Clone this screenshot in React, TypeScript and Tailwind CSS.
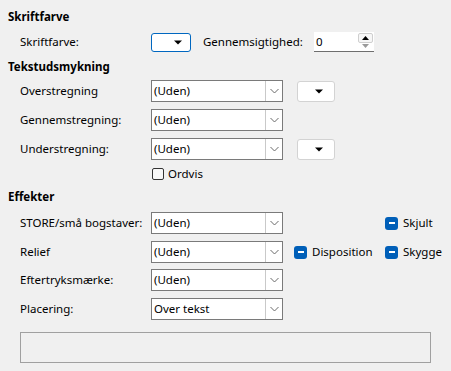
import React from "react";

const Caret = ({ color = "#000" }: { color?: string }) => (
  <svg width="8" height="5" viewBox="0 0 8 5">
    <path d="M0 0.5 H8 L4 4.5 Z" fill={color} />
  </svg>
);

const Chevron = () => (
  <svg width="9" height="6" viewBox="0 0 9 6">
    <path d="M0.5 1 L4.5 5 L8.5 1" fill="none" stroke="#6b6b6b" strokeWidth="1" />
  </svg>
);

function Combo({ value }: { value: string }) {
  return (
    <div className="flex h-[22px] w-[132px] shrink-0 items-stretch border border-[#7a7a7a] bg-white">
      <div className="flex flex-1 items-center pl-[2px] text-black">{value}</div>
      <div className="flex w-[17px] items-center justify-center border-l border-[#c9c9c9]">
        <Chevron />
      </div>
    </div>
  );
}

function ColorBtn({ active }: { active?: boolean }) {
  return (
    <div
      className={
        "flex shrink-0 items-center justify-end rounded-[3px] border bg-white " +
        (active ? "h-[19px] w-[40px] border-[#0067c0] pr-[8px]" : "h-[21px] w-[38px] border-[#d3d3d3] pr-[11px]")
      }
    >
      <Caret />
    </div>
  );
}

function TriBox({ label }: { label: string }) {
  return (
    <div className="flex items-center gap-[5px] whitespace-nowrap">
      <div className="flex h-[13px] w-[13px] items-center justify-center rounded-[3px] bg-[#005fb8]">
        <div className="h-[1.5px] w-[6px] bg-white" />
      </div>
      <span>{label}</span>
    </div>
  );
}

function Row({ label, children, className = "" }: { label: string; children: React.ReactNode; className?: string }) {
  return (
    <div className={"flex h-[22px] items-center " + className}>
      <div className="w-[143px] shrink-0 whitespace-nowrap pl-[12px]">{label}</div>
      {children}
    </div>
  );
}

export default function App() {
  return (
    <div
      className="h-[371px] w-[451px] overflow-hidden bg-[#f0f0f0] px-[8px] text-[11.5px] text-black"
      style={{ fontFamily: '"Segoe UI", "Noto Sans", sans-serif' }}
    >
      <div className="mt-[9px] h-[16px] font-bold leading-[16px]">Skriftfarve</div>
      <Row label="Skriftfarve:" className="mt-[6px]">
        <ColorBtn active />
        <span className="ml-[12px] w-[111px] shrink-0 whitespace-nowrap">Gennemsigtighed:</span>
        <div className="flex h-[20px] w-[60px] shrink-0 items-stretch border-b border-[#6e6e6e] bg-white">
          <div className="flex flex-1 items-center pl-[2px]">0</div>
          <div className="flex w-[16px] flex-col py-[1px] pr-[1px]">
            <div className="flex flex-1 items-center justify-center rounded-[2px] border border-[#cfcfcf] bg-[#f7f7f7]">
              <svg width="7" height="4" viewBox="0 0 7 4"><path d="M0 4 H7 L3.5 0 Z" fill="#000" /></svg>
            </div>
            <div className="flex flex-1 items-center justify-center">
              <svg width="7" height="4" viewBox="0 0 7 4"><path d="M0 0 H7 L3.5 4 Z" fill="#9a9a9a" /></svg>
            </div>
          </div>
        </div>
      </Row>

      <div className="mt-[6px] h-[16px] font-bold leading-[16px]">Tekstudsmykning</div>
      <Row label="Overstregning" className="mt-[5px]">
        <Combo value="(Uden)" />
        <div className="ml-[14px]"><ColorBtn /></div>
      </Row>
      <Row label="Gennemstregning:" className="mt-[7px]">
        <Combo value="(Uden)" />
      </Row>
      <Row label="Understregning:" className="mt-[7px]">
        <Combo value="(Uden)" />
        <div className="ml-[14px]"><ColorBtn /></div>
      </Row>
      <div className="mt-[6px] flex h-[16px] items-center pl-[144px]">
        <div className="h-[12px] w-[12px] rounded-[2px] border border-[#333] bg-[#f7f7f7]" />
        <span className="ml-[4px]">Ordvis</span>
      </div>

      <div className="mt-[7px] h-[16px] font-bold leading-[16px]">Effekter</div>
      <Row label="STORE/små bogstaver:" className="mt-[7px]">
        <Combo value="(Uden)" />
        <div className="ml-[102px]"><TriBox label="Skjult" /></div>
      </Row>
      <Row label="Relief" className="mt-[7px]">
        <Combo value="(Uden)" />
        <div className="ml-[11px] w-[91px] shrink-0"><TriBox label="Disposition" /></div>
        <TriBox label="Skygge" />
      </Row>
      <Row label="Eftertryksmærke:" className="mt-[6px]">
        <Combo value="(Uden)" />
      </Row>
      <Row label="Placering:" className="mt-[7px]">
        <Combo value="Over tekst" />
      </Row>

      <div className="ml-[12px] mt-[12px] h-[31px] w-[411px] border border-[#a0a0a0]" />
    </div>
  );
}
